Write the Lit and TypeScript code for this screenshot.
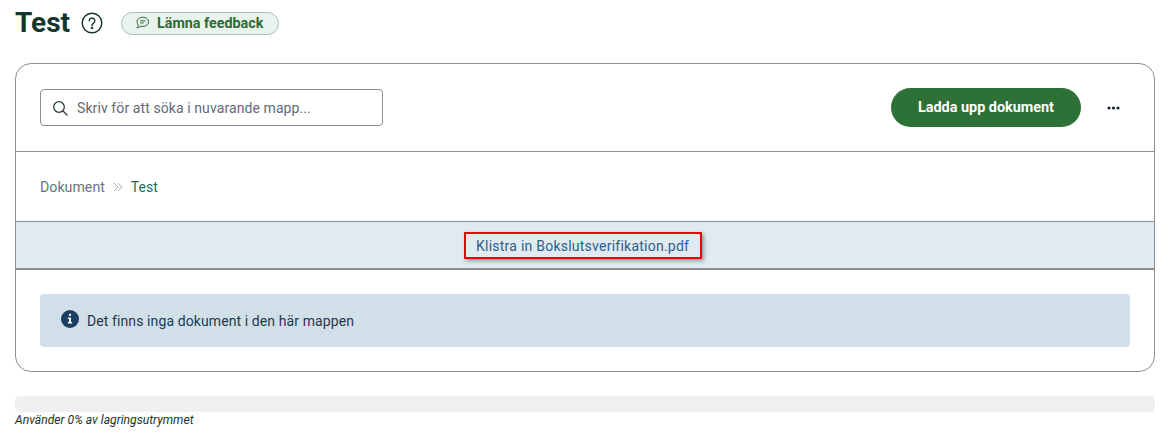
import {css, html, LitElement} from 'lit';
import {customElement} from 'lit/decorators.js';

@customElement('app-root')
export class AppRoot extends LitElement {
    static get styles() {
        return css`
            :host {
                display: block;
                height: 441px;
                padding: 0 17px 0 15px;
                box-sizing: border-box;
                overflow: hidden;
                background: #fff;
                font-family: Roboto, "Noto Sans", sans-serif;
                color: #1d3a52;
            }

            .header {
                display: flex;
                align-items: center;
                height: 46px;
            }

            .title {
                margin: 0;
                font-size: 28px;
                font-weight: 700;
                color: #14352b;
                line-height: 46px;
            }

            .help {
                display: block;
                margin-left: 11px;
            }

            .feedback {
                display: flex;
                align-items: center;
                gap: 7px;
                box-sizing: border-box;
                width: 158px;
                height: 23px;
                margin-left: 18px;
                padding: 0 0 0 13px;
                border: 1px solid #a3c2ae;
                border-radius: 12px;
                background: #e9f3ed;
                color: #2b6b3a;
                font-size: 14.3px;
                font-weight: 700;
            }

            .card {
                box-sizing: border-box;
                height: 309px;
                margin-top: 17px;
                border: 1px solid #8c8f8e;
                border-radius: 16px;
                overflow: hidden;
            }

            .toolbar {
                display: flex;
                align-items: center;
                box-sizing: border-box;
                height: 88px;
                padding: 0 24px;
                border-bottom: 1px solid #8c8f8e;
            }

            .search {
                display: flex;
                align-items: center;
                gap: 9px;
                box-sizing: border-box;
                width: 343px;
                height: 37px;
                padding: 0 11px;
                border: 1px solid #8c8f8e;
                border-radius: 4px;
                color: #5f6b7a;
                font-size: 14px;
                letter-spacing: 0.09px;
            }

            .upload {
                margin-left: auto;
                padding: 0;
                width: 190px;
                height: 39px;
                border: 0;
                border-radius: 20px;
                background: #2e7136;
                color: #fff;
                font: 700 14.4px Roboto, "Noto Sans", sans-serif;
            }

            .more {
                display: block;
                margin: 0 10px 0 26px;
            }

            .crumbs {
                display: flex;
                align-items: center;
                box-sizing: border-box;
                height: 70px;
                padding-left: 24px;
                border-bottom: 1px solid #8c8f8e;
                font-size: 14.2px;
                color: #66767f;
            }

            .crumbs svg {
                margin: 0 8px;
            }

            .crumbs .current {
                color: #1e6b5a;
                font-size: 14px;
            }

            .paste {
                display: flex;
                align-items: center;
                justify-content: center;
                box-sizing: border-box;
                height: 48px;
                padding-right: 4px;
                border-bottom: 2px solid #8c8f8e;
                background: #e2eaf1;
            }

            .paste span {
                box-sizing: border-box;
                display: block;
                width: 238px;
                padding: 1px 10px 0;
                line-height: 22px;
                border: 2px solid #f00000;
                box-shadow: 2px 2px 4px rgba(0, 0, 0, 0.35);
                color: #27618c;
                font-size: 14px;
                letter-spacing: 0.24px;
                white-space: nowrap;
            }

            .info {
                display: flex;
                align-items: center;
                gap: 8px;
                height: 53px;
                margin: 24px 24px 0;
                padding: 0 20px 0 21px;
                border-radius: 4px;
                background: #d1dfe8;
                font-size: 14px;
                letter-spacing: 0.1px;
            }

            .info svg {
                margin-top: -3px;
            }

            .storage {
                height: 16px;
                margin-top: 24px;
                border-radius: 4px;
                background: #f0f0f2;
            }

            .usage {
                margin-top: 1px;
                font-size: 12.15px;
                font-style: italic;
                color: #22332b;
            }
        `;
    }

    protected render() {
        return html`
            <div class="header">
                <h1 class="title">Test</h1>
                <svg class="help" width="22" height="22" viewBox="0 0 22 22" fill="none" stroke="#14352b" stroke-width="1.4">
                    <circle cx="11" cy="11" r="9.8"></circle>
                    <path d="M8.2 8.8a2.8 2.8 0 1 1 4.4 2.3c-1 .7-1.6 1.2-1.6 2.4" stroke-linecap="round"></path>
                    <circle cx="11" cy="16" r=".6" fill="#14352b"></circle>
                </svg>
                <div class="feedback">
                    <svg width="15" height="14" viewBox="0 0 15 14" fill="none" stroke="#2b6b3a" stroke-width="1">
                        <path d="M7.8 1.2c3.2 0 5.8 1.9 5.8 4.6s-2.6 4.6-5.8 4.6c-.7 0-1.3-.1-1.9-.3-.9.9-2.200 1.500-4 1.700.8-.8 1.300-1.700 1.300-2.800C2.700 8 2 7 2 5.800c0-2.700 2.600-4.600 5.800-4.600z"></path>
                        <path d="M5.200 4.800h5.200M5.200 6.900h3.600"></path>
                    </svg>
                    <span>Lämna feedback</span>
                </div>
            </div>
            <div class="card">
                <div class="toolbar">
                    <div class="search">
                        <svg width="16" height="16" viewBox="0 0 16 16" fill="none" stroke="#2a3a40" stroke-width="1.300">
                            <circle cx="7" cy="7" r="5.300"></circle>
                            <path d="M11 11l4 4" stroke-linecap="round"></path>
                        </svg>
                        <span>Skriv för att söka i nuvarande mapp...</span>
                    </div>
                    <button class="upload">Ladda upp dokument</button>
                    <svg class="more" width="13" height="4" viewBox="0 0 13 4" fill="#14252b">
                        <circle cx="2" cy="2" r="1.600"></circle>
                        <circle cx="6.500" cy="2" r="1.600"></circle>
                        <circle cx="11" cy="2" r="1.600"></circle>
                    </svg>
                </div>
                <div class="crumbs">
                    <span>Dokument</span>
                    <svg width="10" height="10" viewBox="0 0 10 10" fill="none" stroke="#a9b4b0" stroke-width="1">
                        <path d="M1 1l4 4-4 4M5 1l4 4-4 4"></path>
                    </svg>
                    <span class="current">Test</span>
                </div>
                <div class="paste"><span>Klistra in Bokslutsverifikation.pdf</span></div>
                <div class="info">
                    <svg width="18" height="18" viewBox="0 0 18 18">
                        <circle cx="9" cy="9" r="9" fill="#1b3f63"></circle>
                        <rect x="7.900" y="3.700" width="2.200" height="2.200" rx="1" fill="#fff"></rect>
                        <path d="M6.900 7.500h3.100v4.600h1.100v1.400H6.900v-1.400h1.100V8.900H6.900z" fill="#fff"></path>
                    </svg>
                    <span>Det finns inga dokument i den här mappen</span>
                </div>
            </div>
            <div class="storage"></div>
            <div class="usage">Använder 0% av lagringsutrymmet</div>
        `;
    }
}
